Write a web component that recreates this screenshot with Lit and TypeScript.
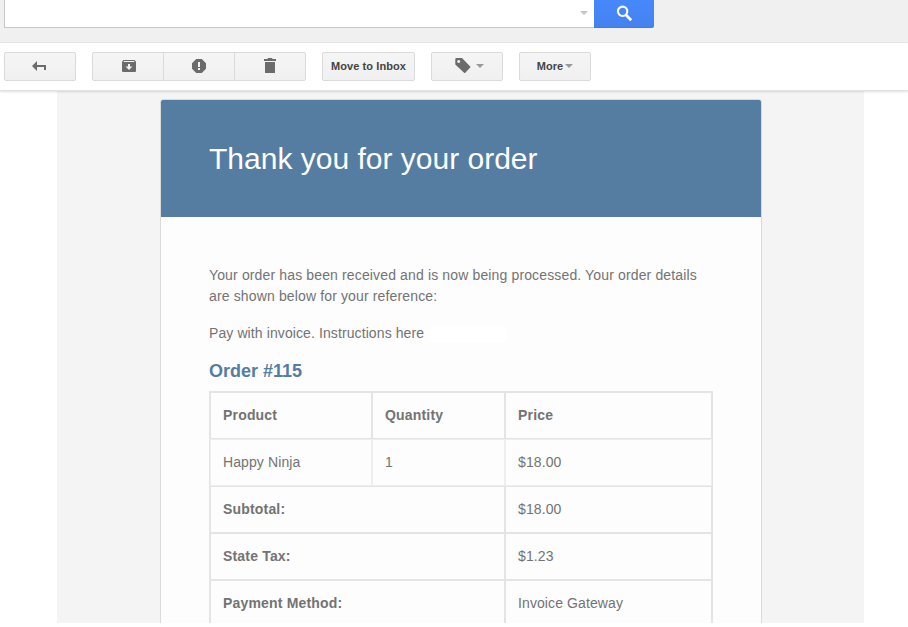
import { LitElement, html, css } from "lit";
import { customElement } from "lit/decorators.js";

const totals = [
  ["Subtotal:", "$18.00"],
  ["State Tax:", "$1.23"],
  ["Payment Method:", "Invoice Gateway"],
];

@customElement("app-root")
export class AppRoot extends LitElement {
  static styles = css`
    :host {
      display: flex;
      flex-direction: column;
      height: 623px;
      overflow: hidden;
      background: #fff;
      font-family: "Liberation Sans", Arial, sans-serif;
    }
    * { box-sizing: border-box; }
    svg { display: block; }
    .search {
      flex: none;
      display: flex;
      align-items: flex-start;
      height: 43px;
      padding-left: 4px;
      background: #f0f0f0;
      border-bottom: 1px solid #e5e5e5;
    }
    .field {
      display: flex;
      align-items: center;
      justify-content: flex-end;
      width: 590px;
      height: 28px;
      padding: 0 6px 1px 0;
      background: #fff;
      border: 1px solid #c8c8c8;
      border-top: 0;
      border-right: 0;
    }
    .go {
      display: flex;
      justify-content: center;
      width: 60px;
      height: 28px;
      padding-top: 5px;
      background: linear-gradient(#4688fb, #4582ee);
      border-bottom: 1px solid #3f7de6;
      border-radius: 0 0 2px 0;
    }
    .toolbar {
      flex: none;
      position: relative;
      display: flex;
      gap: 16px;
      height: 48px;
      padding: 9px 4px 0;
      background: #fff;
      border-bottom: 1px solid #e2e2e2;
      box-shadow: 0 1px 2px rgba(0, 0, 0, 0.13);
    }
    .group {
      display: flex;
      height: 29px;
      border: 1px solid #dadada;
      border-radius: 2px;
      background: linear-gradient(#f5f5f5, #f0f0f0);
    }
    .button {
      display: flex;
      align-items: center;
      justify-content: center;
      width: 70px;
      padding-bottom: 1px;
      font-size: 11px;
      font-weight: bold;
      color: #444;
    }
    .group .button + .button {
      width: 71px;
      border-left: 1px solid #dadada;
    }
    .button.reply { padding: 0 2px 1px 0; }
    .button.archive { padding: 0 0 1px 2px; }
    .group .button.trash { padding: 0 1px 2px 0; }
    .inbox { width: 91px; letter-spacing: 0.09px; }
    .button.tag { gap: 5px; padding: 0 0 2px 5px; }
    .more { gap: 2px; letter-spacing: 0.1px; }
    .arrow {
      width: 0;
      height: 0;
      border: 4px solid transparent;
      border-top-color: #999;
      border-bottom: 0;
    }
    .arrow.light { border-top-color: #c6c6c6; }
    .mail {
      flex: 1;
      min-height: 0;
      width: 807px;
      margin-left: 57px;
      padding: 8px 0 0 103px;
      background: #f4f4f4;
    }
    .card {
      width: 602px;
      height: 600px;
      background: #fdfdfd;
      border: 1px solid #dadada;
      border-radius: 3px;
      color: #737373;
      font-size: 14px;
      line-height: 21px;
    }
    .title {
      height: 117px;
      margin: 0;
      padding: 36px 48px;
      background: #557da1;
      border-radius: 2px 2px 0 0;
      color: #fff;
      font-size: 30px;
      font-weight: 400;
      line-height: 45px;
    }
    .content { padding: 48px 48px 0; }
    .content p { margin: 0 0 16px; white-space: nowrap; letter-spacing: 0.14px; }
    .content .note { display: flex; align-items: center; gap: 2px; letter-spacing: 0.1px; }
    .blank { width: 82px; height: 18px; border-radius: 9px; background: #fff; }
    .number {
      margin: 0 0 8px;
      color: #557da1;
      font-size: 18px;
      line-height: 23px;
    }
    .order {
      width: 504px;
      table-layout: fixed;
      border: 1px solid #e4e4e4;
      border-spacing: 0;
      text-align: left;
    }
    .order th, .order td {
      height: 47px;
      padding: 0 12px;
      border: 1px solid #e4e4e4;
      letter-spacing: 0.1px;
    }
    .order th { letter-spacing: 0.18px; }
    .order tbody td { border-color: #eee; }
    .product { width: 162px; }
    .quantity { width: 133px; }
  `;

  render() {
    return html`
      <header class="search">
        <div class="field"><i class="arrow light"></i></div>
        <div class="go">
          <svg width="17" height="17" viewBox="0 0 17 17" fill="none" stroke="#fff">
            <circle cx="6.6" cy="6.3" r="4.7" stroke-width="2.1" />
            <path d="M9.8 9.7 15.2 15.3" stroke-width="2.7" />
          </svg>
        </div>
      </header>
      <nav class="toolbar">
        <div class="group"><div class="button reply">
          <svg width="14" height="10" viewBox="0 0 14 10" fill="#6b6b6b">
            <path d="M0 5 5 0V4H14V9H12V6H5V10Z" />
          </svg>
        </div></div>
        <div class="group">
          <div class="button archive">
            <svg width="14" height="12" viewBox="0 0 14 12" fill="#6b6b6b">
              <path fill-rule="evenodd" d="M1.5 0h11L14 1.8V11a1 1 0 0 1-1 1H1a1 1 0 0 1-1-1V1.8ZM2 1.1 1.5 2h11L12 1.1ZM6 4v2.500H3.6L7 10l3.400-3.500H8V4Z" />
            </svg>
          </div>
          <div class="button">
            <svg width="14" height="14" viewBox="0 0 14 14" fill="#6b6b6b">
              <path fill-rule="evenodd" d="M4.2 0h5.6L14 4.2v5.6L9.8 14H4.2L0 9.8V4.2ZM6 3v5h2V3ZM6 9v2h2V9Z" />
            </svg>
          </div>
          <div class="button trash">
            <svg width="12" height="15" viewBox="0 0 12 15" fill="#6b6b6b">
              <path d="M0 1h3.500l.5-1h4l.5 1H12v2H0ZM1 4h10v11H1Z" />
            </svg>
          </div>
        </div>
        <div class="group"><div class="button inbox">Move to Inbox</div></div>
        <div class="group"><div class="button tag">
          <svg width="16" height="16" viewBox="0 0 16 16" fill="#6b6b6b">
            <path fill-rule="evenodd" d="M1.5 0H7L15.2 8.400a.9.900 0 0 1 0 1.200L10.300 14.700a.9.900 0 0 1-1.200 0L.3 6.500V1a1 1 0 0 1 1-1ZM3.700 1.900a1.500 1.500 0 1 0 .01 0Z" />
          </svg>
          <i class="arrow"></i>
        </div></div>
        <div class="group"><div class="button more">More<i class="arrow"></i></div></div>
      </nav>
      <main class="mail">
        <article class="card">
          <h1 class="title">Thank you for your order</h1>
          <div class="content">
            <p>Your order has been received and is now being processed. Your order details<br />are shown below for your reference:</p>
            <p class="note">Pay with invoice. Instructions here<span class="blank"></span></p>
            <h2 class="number">Order #115</h2>
            <table class="order">
              <thead>
                <tr><th class="product">Product</th><th class="quantity">Quantity</th><th>Price</th></tr>
              </thead>
              <tbody>
                <tr><td>Happy Ninja</td><td>1</td><td>$18.00</td></tr>
              </tbody>
              <tfoot>
                ${totals.map(([label, value]) => html`<tr><th colspan="2">${label}</th><td>${value}</td></tr>`)}
              </tfoot>
            </table>
          </div>
        </article>
      </main>
    `;
  }
}
